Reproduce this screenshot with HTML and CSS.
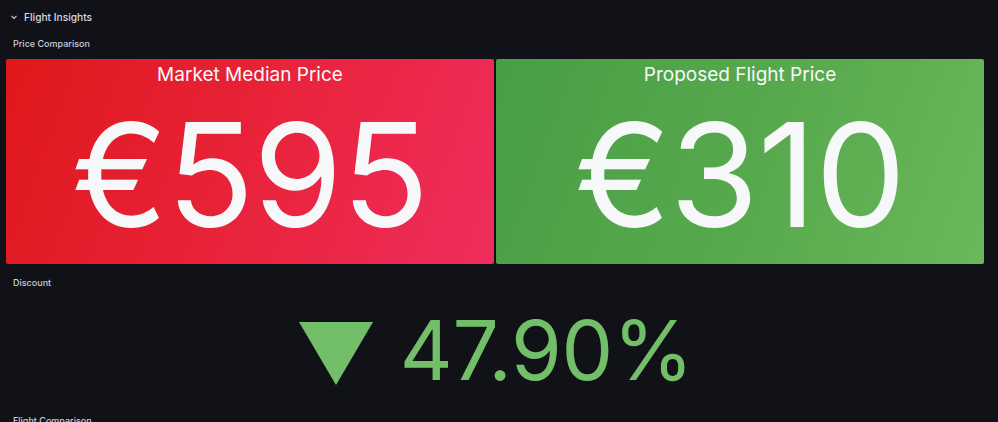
FILE: index.html
```html
<!DOCTYPE html>
<html>
<head>
<meta charset="utf-8">
<link rel="stylesheet" href="styles.css">
</head>
<body>
<div class="dashboard">
  <div class="row-header">
    <svg class="chevron" width="8" height="8" viewBox="0 0 8 8"><path d="M1.5 2.8 L4 5.3 L6.5 2.8" fill="none" stroke="#ccccdc" stroke-width="1.2"/></svg>
    <span class="row-title">Flight Insights</span>
  </div>
  <div class="section-title">Price Comparison</div>
  <div class="stat-grid">
    <div class="stat red">
      <div class="stat-title">Market Median Price</div>
      <div class="stat-value">€595</div>
    </div>
    <div class="stat green">
      <div class="stat-title">Proposed Flight Price</div>
      <div class="stat-value">€310</div>
    </div>
  </div>
  <div class="section-title discount-title">Discount</div>
  <div class="discount">
    <svg class="arrow" width="74" height="63" viewBox="0 0 74 63"><polygon points="0,0 74,0 37,63" fill="#73bf69"/></svg>
    <span class="discount-value">47.90%</span>
  </div>
  <div class="section-title next-title">Flight Comparison</div>
</div>
</body>
</html>
```
FILE: styles.css
```css
html, body {
  margin: 0;
  padding: 0;
  background: #111217;
  font-family: Inter, "Noto Sans", sans-serif;
  color: #ccccdc;
  overflow: hidden;
}
.dashboard {
  padding: 0 14px 0 6px;
}
.row-header {
  display: flex;
  align-items: center;
  height: 34px;
  padding-left: 4px;
  gap: 6px;
}
.chevron {
  display: block;
}
.row-title {
  font-size: 10.2px;
  font-weight: 500;
  color: #d8d9e3;
}
.section-title {
  font-size: 9px;
  font-weight: 500;
  color: #ccccdc;
  padding-left: 7px;
  height: 20px;
  line-height: 20px;
  margin-top: 0;
}
.stat-grid {
  display: grid;
  grid-template-columns: 1fr 1fr;
  gap: 2px;
  margin-top: 5px;
}
.stat {
  height: 205px;
  border-radius: 2px;
  display: flex;
  flex-direction: column;
  align-items: center;
  color: #f7f8fa;
}
.red {
  background: linear-gradient(110deg, #df181b 0%, #e8233a 50%, #ef2d5d 100%);
}
.green {
  background: linear-gradient(110deg, #489e46 0%, #56a84c 50%, #6ab85a 100%);
}
.stat-title {
  font-size: 19px;
  line-height: 24px;
  margin-top: 4px;
}
.stat-value {
  font-size: 144px;
  line-height: 150px;
  margin-top: 13px;
  letter-spacing: -1px;
}
.discount-title {
  margin-top: 9px;
}
.discount {
  display: flex;
  justify-content: center;
  align-items: center;
  gap: 27px;
  height: 100px;
  margin-top: 8px;
  padding-left: 2px;
}
.arrow {
  display: block;
  margin-top: 4px;
}
.discount-value {
  font-size: 82px;
  line-height: 96px;
  color: #73bf69;
  letter-spacing: -0.3px;
}
.next-title {
  margin-top: 10px;
}
```
